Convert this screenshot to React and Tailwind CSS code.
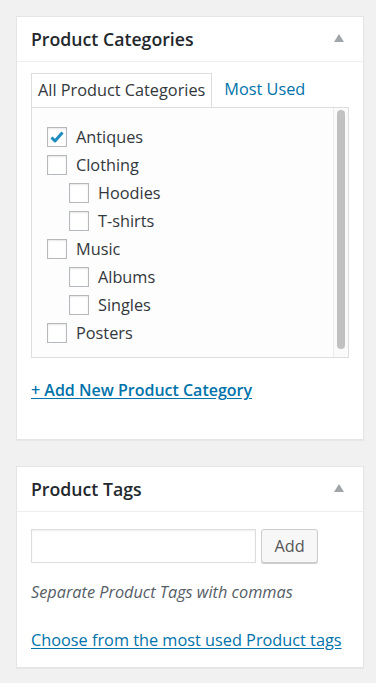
import React from "react";

const categories = [
  { name: "Antiques", level: 0, checked: true },
  { name: "Clothing", level: 0 },
  { name: "Hoodies", level: 1 },
  { name: "T-shirts", level: 1 },
  { name: "Music", level: 0 },
  { name: "Albums", level: 1 },
  { name: "Singles", level: 1 },
  { name: "Posters", level: 0 },
];

function Toggle() {
  return (
    <svg width="10" height="8" viewBox="0 0 10 8" className="text-[#a0a5aa]">
      <polygon points="5,0 10,8 0,8" fill="currentColor" />
    </svg>
  );
}

function Checkbox({ checked }) {
  return (
    <span className="flex h-5 w-5 shrink-0 items-center justify-center border border-[#b4b9be] bg-white shadow-[inset_0_1px_2px_rgba(0,0,0,0.1)]">
      {checked && (
        <svg width="14" height="12" viewBox="0 0 14 12">
          <path
            d="M1.5 6.5 L5 10 L12.5 1.5"
            fill="none"
            stroke="#1e8cbe"
            strokeWidth="3"
            strokeLinejoin="round"
          />
        </svg>
      )}
    </span>
  );
}

function Panel({ title, children }) {
  return (
    <div className="ml-4 w-[348px] border border-[#e5e5e5] bg-white shadow-[0_1px_1px_rgba(0,0,0,0.04)]">
      <div className="flex h-[45px] items-center justify-between border-b border-[#eeeeee] px-[14px]">
        <h2 className="text-[17.7px] font-semibold text-[#23282d]">{title}</h2>
        <span className="mr-[5px] mt-[-2px]">
          <Toggle />
        </span>
      </div>
      {children}
    </div>
  );
}

export default function App() {
  return (
    <div
      className="min-h-[683px] bg-[#f1f1f1] pt-4 text-[16.3px] text-[#32373c]"
      style={{ fontFamily: '"Open Sans", "Liberation Sans", sans-serif' }}
    >
      <Panel title="Product Categories">
        <div className="px-[14px] pt-[11px] pb-[37px]">
          <div className="flex items-end">
            <div className="h-[34px] border border-b-0 border-[#dddddd] bg-white px-[6px] leading-[32px] text-[#32373c]">
              All Product Categories
            </div>
            <div className="ml-[12px] h-[34px] leading-[32px] text-[#0073aa]">
              Most Used
            </div>
          </div>
          <div className="flex h-[251px] border border-[#dddddd] bg-[#fdfdfd]">
            <ul className="flex-1 pl-[15px] pt-[15px]">
              {categories.map((c) => (
                <li
                  key={c.name}
                  className={`flex h-[28px] items-center gap-[9px] ${
                    c.level === 1 ? "pl-[22px]" : ""
                  }`}
                >
                  <Checkbox checked={c.checked} />
                  <span>{c.name}</span>
                </li>
              ))}
            </ul>
            <div className="w-[15px] border-l border-[#ececec] bg-[#fafafa] px-[3px] pt-[2px] pb-[8px]">
              <div className="h-full rounded-full bg-[#c1c1c1]" />
            </div>
          </div>
          <a
            href="#"
            className="mt-[20px] block text-[16px] font-semibold text-[#0073aa] underline underline-offset-2"
          >
            + Add New Product Category
          </a>
        </div>
      </Panel>

      <div className="h-[26px]" />

      <Panel title="Product Tags">
        <div className="px-[14px] pt-[17px] pb-[15px]">
          <div className="flex gap-[5px]">
            <input
              type="text"
              className="h-[34px] w-[225px] border border-[#dddddd] bg-white shadow-[inset_0_1px_2px_rgba(0,0,0,0.07)] outline-none"
            />
            <button className="h-[34px] w-[57px] rounded-[3px] border border-[#cccccc] bg-[#f7f7f7] text-[#555555] shadow-[0_1px_0_#cccccc]">
              Add
            </button>
          </div>
          <p className="mt-[17px] leading-6 italic text-[#555d66]">
            Separate Product Tags with commas
          </p>
          <a
            href="#"
            className="mt-[24px] block leading-6 text-[#0073aa] underline underline-offset-2"
          >
            Choose from the most used Product tags
          </a>
        </div>
      </Panel>
      <div className="h-[15px]" />
    </div>
  );
}
